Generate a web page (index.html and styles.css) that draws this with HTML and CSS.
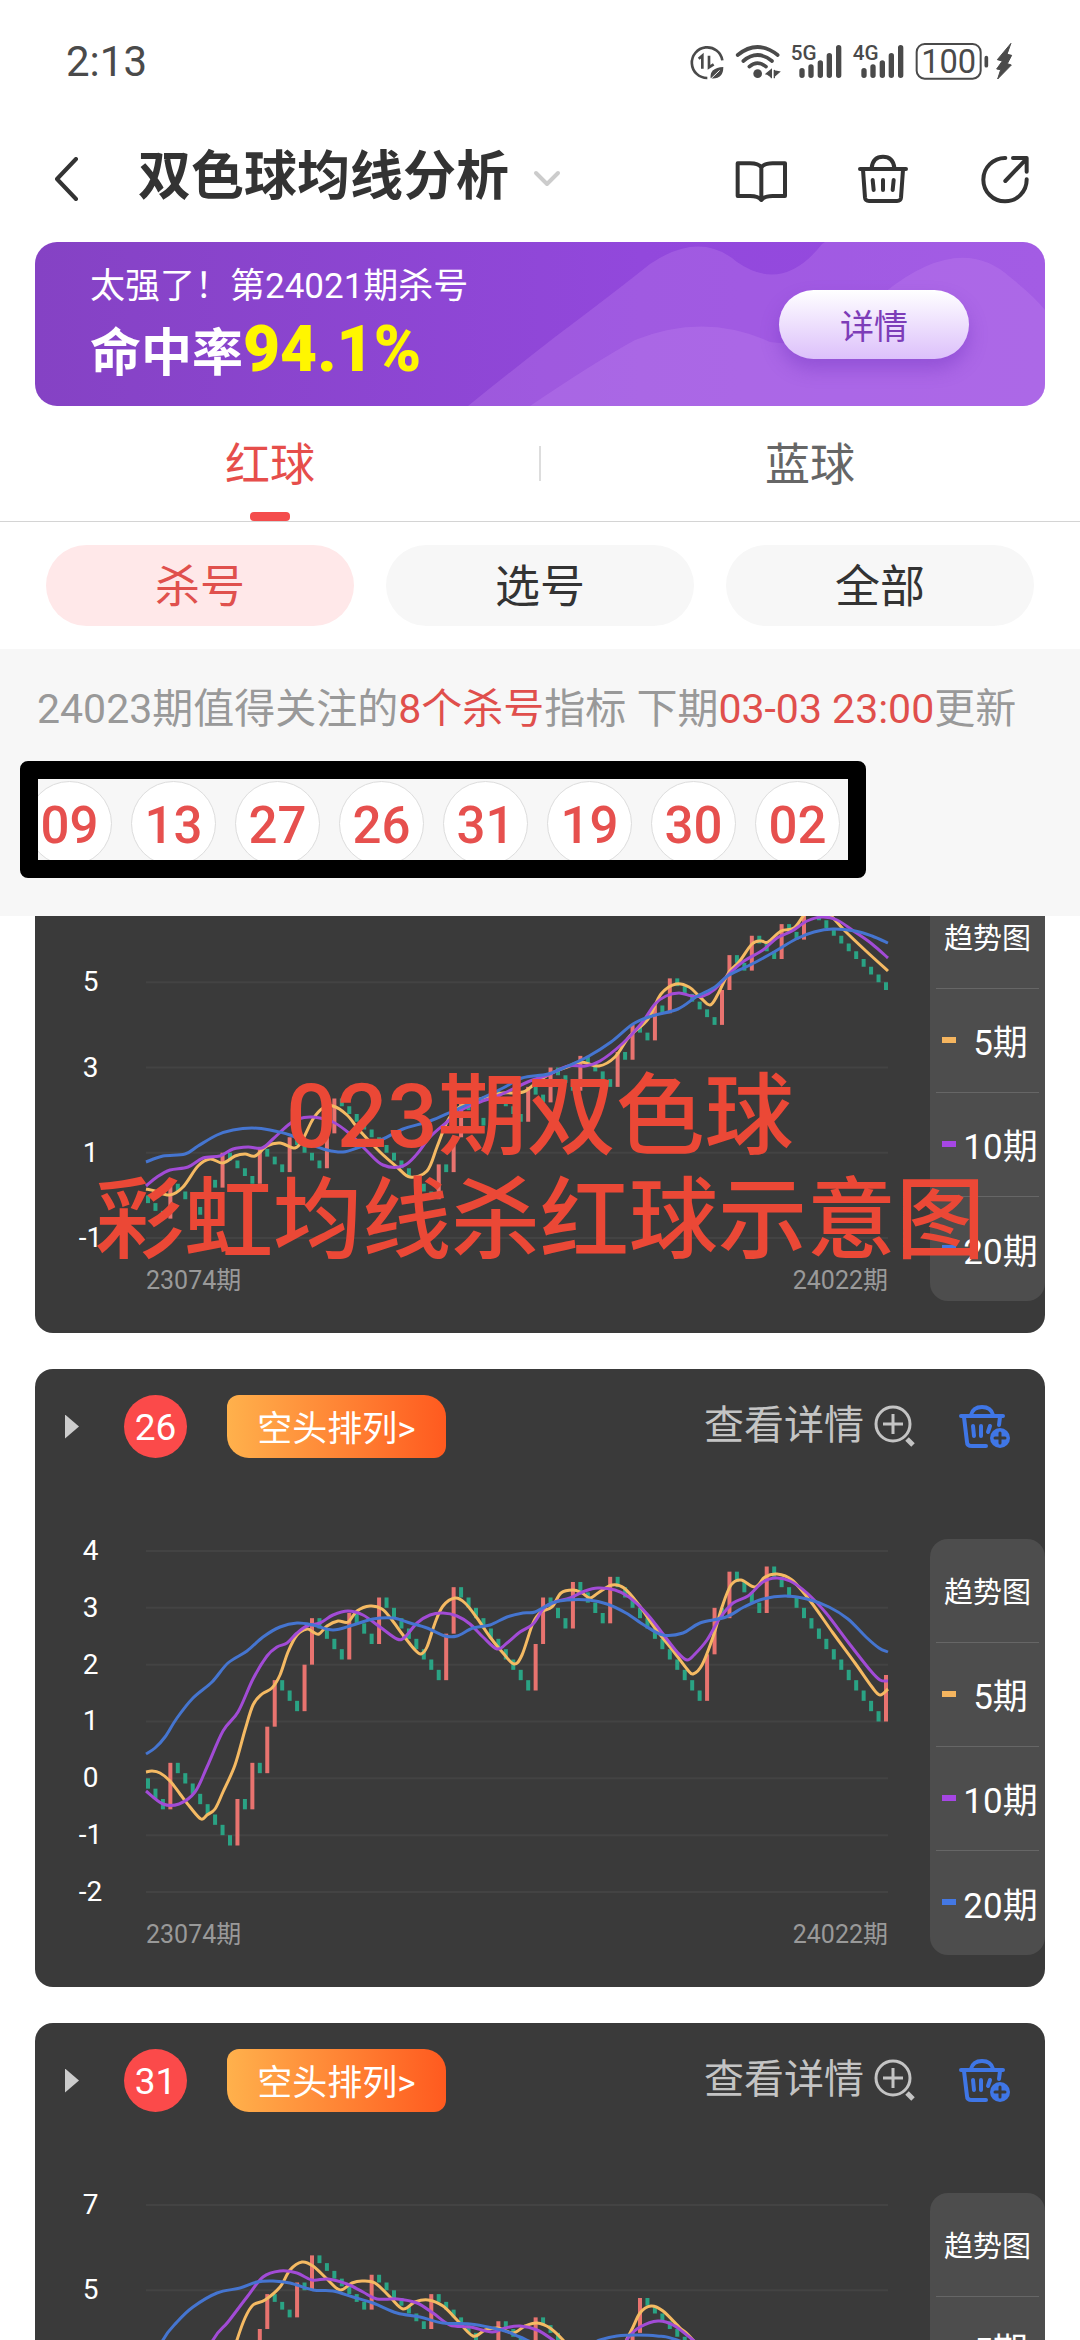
FILE: index.html
```html
<!DOCTYPE html>
<html lang="zh-CN">
<head>
  <meta charset="UTF-8">
  <meta name="viewport" content="width=device-width, initial-scale=1.0">
  <title>双色球均线分析</title>
  <link rel="stylesheet" href="styles.css">
</head>
<body>
  <!-- Status Bar -->
  <div class="status-bar">
    <span class="clock">2:13</span>
    <svg class="status-icons" viewBox="145 60 972 120" fill="none" stroke="#4a4a4a" stroke-linecap="round">
      <!-- data saver -->
      <path d="M200 171A46 46 0 1 1 245 118" stroke-width="8" stroke-linecap="butt"/>
      <path d="M174 113L185 104V143M205 104V139L219 130" stroke-width="8" stroke-linecap="butt"/>
      <path d="M210 172Q206 140 248 138Q248 176 210 172Z" fill="#4a4a4a" stroke="none"/>
      <path d="M208 176L236 149" stroke="#fff" stroke-width="3"/>
      <!-- wifi -->
      <path d="M291 102Q350 54 411 102M308 120Q350 84 394 120M326 137Q350 116 376 137" stroke-width="11"/>
      <circle cx="351" cy="158" r="13" fill="#4a4a4a" stroke="none"/>
      <path d="M376 159L392 146V170M401 148V170M401 166L416 153L401 150" fill="#4a4a4a" stroke-width="4"/>
      <!-- signals -->
      <path d="M484 149V163M511 138V163M539 126V163M566 104V163M594 80V163" stroke-width="16"/>
      <path d="M670 149V163M697 138V163M725 126V163M752 104V163M780 80V163" stroke-width="16"/>
      <text class="net" x="450" y="118">5G</text>
      <text class="net" x="636" y="118">4G</text>
      <!-- battery -->
      <rect x="828" y="69" width="192" height="104" rx="24" stroke-width="6"/>
      <path d="M1037 110V134" stroke-width="11"/>
      <text class="battery" x="924" y="156">100</text>
      <path d="M1110 68L1070 116L1085 120L1068 144L1080 146L1071 174L1112 132L1100 128L1113 103L1100 100Z" fill="#4a4a4a" stroke-width="3"/>
    </svg>
  </div>

  <!-- Nav Bar -->
  <header class="nav">
    <button class="icon-btn back" aria-label="返回">
      <svg width="26" height="44" viewBox="0 0 26 44"><path d="M23 2L4 22L23 42"/></svg>
    </button>
    <h1>双色球均线分析</h1>
    <button class="icon-btn more" aria-label="切换">
      <svg width="28" height="18" viewBox="0 0 28 18"><path d="M3 3L14 14L25 3"/></svg>
    </button>
    <div class="nav-actions">
      <button class="icon-btn" aria-label="教程">
        <svg width="52" height="50" viewBox="280 403 156 150"><path d="M359 541Q350 529 325 529H288V431H325Q350 431 359 443Q368 431 393 431H430V529H393Q368 529 359 541ZM359 443V541"/></svg>
      </button>
      <button class="icon-btn" aria-label="号码篮">
        <svg width="52" height="50" viewBox="646 401 156 150"><path d="M655 446H793M690 442Q694 409 724 409Q754 409 758 442M664 448L670 532Q671 542 682 542H766Q777 542 778 532L784 448M693 479L696 509M724 479V509M756 479L753 509"/></svg>
      </button>
      <button class="icon-btn" aria-label="分享">
        <svg width="52" height="50" viewBox="1014 407 156 150"><path d="M1093 419A65 65 0 1 0 1157 483M1093 488L1155 423M1116 419H1157V460"/></svg>
      </button>
    </div>
  </header>

  <!-- Banner -->
  <section class="banner">
    <svg class="waves" viewBox="0 0 1010 164" preserveAspectRatio="none">
      <path d="M433 164Q475 130 520 95Q580 50 615 22Q665 -12 702 20Q748 52 787 2L790 0H1010V164Z"/>
      <path d="M495 164Q560 120 600 98Q670 70 735 100Q800 110 850 50Q925 -10 975 35Q1000 55 1010 68V164Z"/>
    </svg>
    <div class="banner-text">
      <p class="banner-title">太强了！第24021期杀号</p>
      <p class="banner-rate">命中率<strong>94.1%</strong></p>
    </div>
    <button class="detail-btn">详情</button>
  </section>

  <!-- Tabs -->
  <nav class="tabs">
    <button class="tab active">红球</button>
    <button class="tab">蓝球</button>
  </nav>

  <div class="filters">
    <button class="filter active">杀号</button>
    <button class="filter">选号</button>
    <button class="filter">全部</button>
  </div>

  <!-- Recommended Numbers -->
  <section class="summary">
    <p>24023期值得关注的<em>8个杀号</em>指标 下期<em>03-03 23:00</em>更新</p>
    <div class="balls">
      <span>09</span><span>13</span><span>27</span><span>26</span>
      <span>31</span><span>19</span><span>30</span><span>02</span>
      <div class="marker"></div>
    </div>
  </section>

  <!-- Chart Cards -->
  <main class="list" id="list"></main>

  <div class="caption">023期双色球<br>彩虹均线杀红球示意图</div>

  <script src="charts.js"></script>
</body>
</html>
```

FILE: styles.css
```css
/* General Styles */
* {
  box-sizing: border-box;
}

body {
  margin: 0;
  height: 100vh;
  display: flex;
  flex-direction: column;
  position: relative;
  overflow: hidden;
  background-color: #fff;
  color: #333;
  font-family: Roboto, "Noto Sans CJK SC", sans-serif;
}

button {
  border: none;
  padding: 0;
  background: none;
  color: inherit;
  font-family: inherit;
  cursor: pointer;
}

p {
  margin: 0;
}

/* Status Bar */
.status-bar {
  flex: none;
  display: flex;
  align-items: center;
  justify-content: space-between;
  height: 122px;
  padding: 0 67px 0 66px;
}

.clock {
  font-size: 42px;
  color: #4a4a4a;
}

.status-icons {
  width: 324px;
  height: 40px;
}

.status-icons text {
  fill: #4a4a4a;
  stroke: none;
}

.net {
  font-size: 62px;
  font-weight: 500;
}

.battery {
  font-size: 98px;
  text-anchor: middle;
}

/* Nav Bar */
.nav {
  flex: none;
  display: flex;
  align-items: center;
  height: 114px;
  margin-bottom: 6px;
  padding: 0 49px 0 53px;
}

.nav h1 {
  margin: 0 24px 4px 59px;
  font-size: 53px;
  line-height: 60px;
}

.icon-btn {
  display: flex;
}

.icon-btn svg {
  fill: none;
  stroke: #333;
  stroke-width: 12;
  stroke-linecap: round;
  stroke-linejoin: round;
}

.icon-btn.back svg {
  stroke-width: 4;
}

.icon-btn.more svg {
  stroke: #ccc;
  stroke-width: 4;
}

.nav-actions {
  display: flex;
  gap: 70px;
  margin-left: auto;
}

/* Banner */
.banner {
  flex: none;
  position: relative;
  display: flex;
  align-items: center;
  justify-content: space-between;
  height: 164px;
  margin: 0 35px;
  padding: 0 76px 0 55px;
  border-radius: 22px;
  overflow: hidden;
  background: linear-gradient(90deg, #8542c4, #9248dc 60%, #964be0);
  color: #fff;
}

.waves {
  position: absolute;
  inset: 0;
  width: 100%;
  height: 100%;
  fill: #c58af0;
  fill-opacity: 0.28;
}

.banner-text {
  position: relative;
  padding-top: 8px;
}

.banner-title {
  margin-bottom: 4px;
  font-size: 35px;
  line-height: 48px;
}

.banner-rate {
  font-size: 51px;
  font-weight: bold;
  line-height: 78px;
}

.banner-rate strong {
  font-size: 64px;
  line-height: 1;
  color: #fff600;
}

.detail-btn {
  position: relative;
  width: 190px;
  height: 69px;
  border-radius: 35px;
  background: linear-gradient(#fff, #dcc0fb);
  box-shadow: 0 10px 18px rgba(110, 50, 190, 0.4);
  color: #7d3db8;
  font-size: 34px;
}

/* Tabs */
.tabs {
  flex: none;
  display: flex;
  height: 116px;
  border-bottom: 1px solid #d4d4d4;
  background: linear-gradient(#ddd, #ddd) center 40px / 2px 35px no-repeat;
}

.tab {
  flex: 1;
  position: relative;
  padding-bottom: 4px;
  font-size: 45px;
  color: #666;
}

.tab.active {
  color: #e64e4b;
}

.tab.active::after {
  content: "";
  position: absolute;
  left: 50%;
  bottom: 0;
  width: 40px;
  height: 9px;
  margin-left: -20px;
  border-radius: 4px;
  background-color: #f44c4c;
}

.filters {
  flex: none;
  display: flex;
  gap: 32px;
  padding: 23px 46px;
}

.filter {
  flex: 1;
  height: 81px;
  padding-bottom: 4px;
  border-radius: 41px;
  background-color: #f7f7f7;
  font-size: 45px;
}

.filter.active {
  background-color: #ffe8e9;
  color: #e0504d;
}

/* Recommended Numbers */
.summary {
  flex: none;
  height: 267px;
  padding: 30px 27px;
  background-color: #f7f7f7;
}

.summary p {
  margin: 0 10px;
  font-size: 41px;
  line-height: 60px;
  color: #999;
  white-space: nowrap;
}

.summary em {
  font-style: normal;
  color: #e04f4c;
}

.balls {
  position: relative;
  display: flex;
  gap: 19px;
  margin-top: 42px;
}

.balls span {
  width: 85px;
  height: 85px;
  border: 1px solid #ddd;
  border-radius: 50%;
  background-color: #fff;
  color: #e6504e;
  font-size: 51px;
  font-weight: 500;
  line-height: 87px;
  text-align: center;
}

.marker {
  position: absolute;
  top: -20px;
  left: -7px;
  width: 846px;
  height: 117px;
  border: 18px solid #000;
  border-radius: 8px;
}

/* Chart Cards */
.list {
  flex: 1;
  min-height: 0;
  padding: 0 35px;
  overflow-y: auto;
  scrollbar-width: none;
}

.card {
  height: 618px;
  margin-bottom: 36px;
  padding-top: 26px;
  border-radius: 18px;
  background-color: #3a3a3a;
}

.card-head {
  display: flex;
  align-items: center;
  height: 63px;
  margin-bottom: 79px;
  padding: 0 35px 0 30px;
  color: #fff;
}

.arrow {
  width: 14px;
  height: 24px;
  background-color: #ccc;
  clip-path: polygon(0 0, 100% 50%, 0 100%);
}

.num {
  width: 63px;
  height: 63px;
  margin: 0 40px 0 45px;
  border-radius: 50%;
  background-color: #fb4a4a;
  font-size: 37px;
  line-height: 65px;
  text-align: center;
}

.tag {
  width: 219px;
  height: 63px;
  padding-bottom: 2px;
  border-radius: 12px 22px 12px 22px;
  background: linear-gradient(90deg, #ffb14c, #ff5a1f);
  font-size: 35px;
}

.detail-link {
  display: flex;
  align-items: center;
  gap: 10px;
  margin-left: auto;
  color: #c4c4c4;
  font-size: 40px;
  line-height: 56px;
  padding-bottom: 2px;
  text-decoration: none;
}

.detail-link svg {
  fill: none;
  stroke: #c4c4c4;
  stroke-width: 3;
}

.add-btn {
  display: flex;
  margin-left: 42px;
}

.add-btn svg {
  fill: none;
  stroke: #3f76e6;
  stroke-width: 4;
  stroke-linecap: round;
  stroke-linejoin: round;
}

.add-btn .plus {
  fill: #3f76e6;
  stroke: none;
}

.add-btn .plus-sign {
  stroke: #3a3a3a;
  stroke-width: 3;
}

.card-body {
  display: flex;
  align-items: flex-start;
}

.ticks {
  flex: none;
  display: flex;
  flex-direction: column;
  justify-content: space-between;
  width: 111px;
  height: 369px;
  color: #fff;
  font-size: 28px;
  line-height: 28px;
  text-align: center;
}

.plot {
  flex: 1;
  padding-top: 14px;
}

.plot svg {
  display: block;
  width: 100%;
  height: 341px;
  overflow: visible;
}

.grid {
  stroke: #434343;
  stroke-width: 2;
}

.up {
  fill: #e8736f;
}

.down {
  fill: #2aa384;
}

.line {
  fill: none;
  stroke-width: 3;
}

.ma5 {
  stroke: #f5ba63;
  background-color: #f5b55f;
}

.ma10 {
  stroke: #a24bd6;
  background-color: #a646e4;
}

.ma20 {
  stroke: #4575d0;
  background-color: #4478e4;
}

.range {
  display: flex;
  justify-content: space-between;
  margin-top: 28px;
  color: #999;
  font-size: 25px;
  line-height: 30px;
}

.legend {
  flex: none;
  width: 115px;
  margin: 2px 0 0 42px;
  padding: 0 6px;
  border-radius: 18px;
  background-color: #4d4d4d;
  color: #fff;
  font-size: 35px;
}

.legend div {
  display: flex;
  align-items: center;
  justify-content: center;
  height: 104px;
  padding-bottom: 2px;
  border-bottom: 1px solid #666;
}

.legend div:last-child {
  border-bottom: none;
}

.legend .legend-title {
  font-size: 29px;
}

.legend i {
  flex: none;
  width: 14px;
  height: 6px;
  margin: 0 6px;
}

.legend span {
  flex: 1;
  text-align: center;
  white-space: nowrap;
}

/* Caption over the list */
.caption {
  position: absolute;
  top: 1065px;
  left: 0;
  width: 100%;
  color: #eb4836;
  font-size: 89px;
  font-weight: 500;
  line-height: 104px;
  text-align: center;
  pointer-events: none;
}
```

FILE: charts.js
```js
// A miss moves the value down 6/33, a hit moves it up 27/33
const HIT = 27 / 33;
const MISS = -6 / 33;
const COUNT = 100;
const WIDTH = 742;
const HEIGHT = 341;

// Lines are flat lists of x, y points inside the plot
const cards = [
  {
    num: "27", ticks: [7, 5, 3, 1, -1],
    hits: [3, 8, 10, 15, 19, 24, 25, 39, 41, 42, 46, 51, 54, 58, 63, 65, 68, 70, 77, 78, 81, 85, 88],
    ma5: [0,292, 9,294, 24,298, 37,290, 52,269, 64,262, 77,266, 89,259, 99,257, 109,259, 121,249, 134,246, 149,251, 157,242, 167,222, 177,211, 187,209, 201,218, 214,234, 234,255, 251,270, 264,280, 281,274, 291,250, 301,225, 311,212, 324,205, 344,199, 357,196, 377,195, 391,185, 406,176, 421,170, 435,165, 453,169, 469,160, 483,140, 502,122, 515,97, 530,87, 543,90, 554,100, 564,108, 572,97, 583,75, 593,65, 606,47, 615,44, 622,45, 635,34, 648,31, 659,17, 670,10, 684,18, 698,33, 720,54, 742,74],
    ma10: [0,289, 11,280, 24,273, 42,270, 57,261, 74,259, 87,252, 102,250, 116,251, 127,242, 141,229, 152,222, 167,220, 187,225, 204,237, 221,254, 237,268, 257,269, 271,257, 284,240, 301,225, 317,212, 334,205, 354,198, 384,184, 402,178, 422,169, 439,169, 454,164, 476,147, 495,127, 509,107, 520,99, 533,96, 546,99, 557,99, 569,92, 583,77, 598,64, 617,53, 631,41, 646,34, 661,24, 676,20, 691,23, 709,35, 726,47, 742,61],
    ma20: [0,265, 17,259, 39,257, 52,249, 71,238, 87,233, 106,231, 124,233, 144,238, 164,247, 181,253, 197,255, 214,250, 237,242, 257,232, 284,224, 307,214, 334,202, 357,191, 376,181, 402,177, 422,169, 443,159, 465,145, 487,127, 506,119, 532,112, 550,100, 569,90, 583,78, 606,67, 628,55, 650,42, 668,35, 687,32, 709,34, 726,39, 742,46]
  },
  {
    num: "26", ticks: [4, 3, 2, 1, 0, -1, -2],
    hits: [3, 12, 14, 16, 17, 21, 22, 27, 31, 40, 41, 52, 53, 57, 62, 75, 76, 78, 83, 99],
    ma5: [0,221, 6,220, 14,222, 24,230, 34,243, 44,256, 55,268, 61,264, 69,258, 77,241, 89,214, 99,179, 107,154, 116,143, 126,137, 134,124, 142,101, 151,84, 161,78, 167,81, 173,83, 181,75, 192,70, 202,71, 211,60, 224,55, 236,58, 246,69, 257,84, 269,99, 275,103, 281,96, 289,72, 297,55, 309,47, 319,52, 331,67, 344,86, 357,102, 368,113, 376,104, 387,72, 395,61, 406,56, 415,42, 427,39, 436,42, 444,47, 452,42, 466,34, 478,37, 493,54, 509,77, 528,101, 541,118, 547,123, 556,114, 567,86, 576,56, 585,34, 595,29, 609,36, 619,26, 631,23, 646,29, 665,51, 687,82, 709,112, 726,136, 734,144, 742,138],
    ma10: [0,240, 17,253, 33,253, 49,241, 61,216, 77,180, 92,161, 107,128, 121,105, 131,96, 141,92, 151,82, 161,75, 174,72, 187,64, 202,60, 217,64, 234,76, 251,88, 259,86, 271,72, 284,64, 297,62, 311,65, 324,73, 337,86, 351,98, 361,92, 374,81, 387,73, 398,57, 409,51, 424,47, 439,40, 452,37, 469,39, 483,46, 502,64, 520,87, 532,102, 541,109, 548,104, 561,89, 574,67, 587,52, 602,45, 617,31, 630,27, 644,30, 661,42, 680,62, 702,91, 724,119, 734,129, 742,130],
    ma20: [0,203, 9,197, 19,186, 31,167, 47,147, 66,131, 82,112, 101,100, 117,86, 134,76, 151,72, 167,74, 187,79, 207,74, 227,68, 247,67, 264,72, 281,77, 299,85, 311,85, 327,77, 344,74, 361,66, 377,62, 389,61, 406,52, 421,49, 443,49, 461,53, 480,62, 498,74, 517,84, 537,82, 554,72, 580,66, 598,56, 617,48, 639,45, 661,48, 683,56, 702,68, 720,86, 733,97, 742,101]
  },
  {
    num: "31", ticks: [7, 5, 3, 1, -1],
    hits: [2, 4, 6, 8, 10, 12, 15, 16, 20, 22, 30, 38, 47, 52, 61, 65, 66, 80, 90],
    ma5: [0,260, 60,220, 84,160, 91,135, 99,113, 107,100, 119,95, 134,82, 144,65, 156,57, 167,61, 181,74, 194,85, 206,78, 216,76, 229,78, 244,92, 257,104, 269,97, 282,95, 297,101, 311,115, 327,131, 339,125, 352,123, 367,128, 379,121, 391,118, 404,123, 417,135, 434,155, 464,160, 484,128, 494,108, 505,101, 517,106, 534,123, 547,135, 600,200, 660,230, 742,260],
    ma10: [0,260, 40,190, 67,135, 82,117, 101,92, 117,72, 134,66, 151,68, 166,75, 182,74, 201,79, 217,87, 231,94, 251,94, 271,98, 287,108, 304,120, 324,122, 346,127, 359,123, 374,121, 391,125, 407,135, 440,160, 465,160, 482,133, 494,122, 512,116, 527,120, 547,135, 640,210, 742,250],
    ma20: [0,175, 17,135, 31,117, 47,102, 71,88, 94,83, 111,77, 127,76, 144,78, 167,85, 187,86, 207,92, 227,98, 251,108, 274,112, 297,118, 324,119, 347,123, 362,127, 374,132, 400,142, 436,142, 454,135, 471,131, 491,130, 511,131, 531,135, 600,160, 742,200]
  }
];

function candles(hits, max, min) {
  const unit = HEIGHT / (max - min);
  let value = 0;
  let out = "";
  for (let i = 0; i < COUNT; i++) {
    const hit = hits.includes(i);
    const next = value + (hit ? HIT : MISS);
    const x = i * (WIDTH - 4) / (COUNT - 1);
    const y = (max - Math.max(value, next)) * unit;
    const h = Math.abs(next - value) * unit;
    out += `<rect class="${hit ? "up" : "down"}" x="${x}" y="${y}" width="4" height="${h}"/>`;
    value = next;
  }
  return out;
}

// Smooth curve through every point
function curve(p) {
  const n = p.length / 2;
  const at = i => {
    const k = Math.max(0, Math.min(n - 1, i));
    return [p[k * 2], p[k * 2 + 1]];
  };
  let d = `M${p[0]} ${p[1]}`;
  for (let i = 0; i < n - 1; i++) {
    const [a, b, c, e] = [at(i - 1), at(i), at(i + 1), at(i + 2)];
    d += `C${b[0] + (c[0] - a[0]) / 6} ${b[1] + (c[1] - a[1]) / 6} ${c[0] - (e[0] - b[0]) / 6} ${c[1] - (e[1] - b[1]) / 6} ${c[0]} ${c[1]}`;
  }
  return d;
}

function card(c) {
  const max = c.ticks[0];
  const min = c.ticks[c.ticks.length - 1];
  const grid = c.ticks.map(t => {
    const y = (max - t) / (max - min) * HEIGHT;
    return `<path class="grid" d="M0 ${y}H${WIDTH}"/>`;
  }).join("");

  return `
    <article class="card">
      <div class="card-head">
        <span class="arrow"></span>
        <span class="num">${c.num}</span>
        <button class="tag">空头排列&gt;</button>
        <a class="detail-link" href="#">查看详情
          <svg width="42" height="42" viewBox="0 0 42 42"><circle cx="19" cy="19" r="17"/><path d="M19 9V29M9 19H29"/><path d="M33 34L39 40" stroke-width="5"/></svg>
        </a>
        <button class="add-btn" aria-label="加入号码篮">
          <svg width="52" height="44" viewBox="0 0 52 44"><path d="M3 11H45M13 10Q15 2 24 2Q33 2 35 10M6 12L9 37Q9 41 14 41H28M42 12L41 20M15 21L16 31M23 21V31M32 21L30 27"/><circle class="plus" cx="42" cy="33" r="10"/><path class="plus-sign" d="M42 28V38M37 33H47"/></svg>
        </button>
      </div>
      <div class="card-body">
        <div class="ticks">${c.ticks.map(t => `<span>${t}</span>`).join("")}</div>
        <div class="plot">
          <svg viewBox="0 0 ${WIDTH} ${HEIGHT}" preserveAspectRatio="none">
            ${grid}
            ${candles(c.hits, max, min)}
            <path class="line ma5" d="${curve(c.ma5)}"/>
            <path class="line ma10" d="${curve(c.ma10)}"/>
            <path class="line ma20" d="${curve(c.ma20)}"/>
          </svg>
          <div class="range"><span>23074期</span><span>24022期</span></div>
        </div>
        <div class="legend">
          <div class="legend-title">趋势图</div>
          <div><i class="ma5"></i><span>5期</span></div>
          <div><i class="ma10"></i><span>10期</span></div>
          <div><i class="ma20"></i><span>20期</span></div>
        </div>
      </div>
    </article>`;
}

const list = document.getElementById("list");
list.innerHTML = cards.map(card).join("");
list.scrollTop = 201;
```
